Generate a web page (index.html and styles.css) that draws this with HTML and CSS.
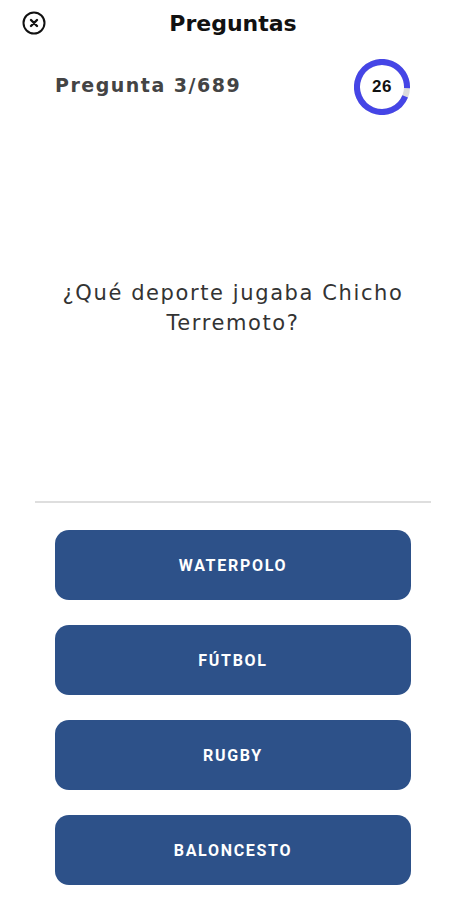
FILE: index.html
```html
<!DOCTYPE html>
<html lang="es">
<head>
  <meta charset="UTF-8">
  <title>Preguntas</title>
  <link rel="stylesheet" href="styles.css">
</head>
<body>

  <div class="topbar">
    <button class="close-btn" aria-label="Cerrar">
      <svg width="24" height="24" viewBox="0 0 24 24">
        <circle cx="12" cy="12" r="10.5" fill="none" stroke="#111" stroke-width="2"/>
        <path d="M9 9 L15 15 M15 9 L9 15" stroke="#111" stroke-width="2.4" stroke-linecap="round"/>
      </svg>
    </button>
    <h1 class="title">Preguntas</h1>
    <div></div>
  </div>

  <div class="status">
    <span class="counter">Pregunta 3/689</span>
    <div class="timer">
      <svg width="56" height="56" viewBox="0 0 56 56">
        <circle cx="28" cy="28" r="25" fill="none" stroke="#dcdcdc" stroke-width="6"/>
        <!-- 26 s restantes -->
        <circle cx="28" cy="28" r="25" fill="none" stroke="#4545e6" stroke-width="6"
                stroke-dasharray="147.5 157.1" transform="rotate(22 28 28)"/>
      </svg>
      <span class="timer-num">26</span>
    </div>
  </div>

  <div class="question-area">
    <p class="question">¿Qué deporte jugaba Chicho Terremoto?</p>
  </div>

  <div class="divider"></div>

  <div class="answers">
    <button class="answer-btn">WATERPOLO</button>
    <button class="answer-btn">FÚTBOL</button>
    <button class="answer-btn">RUGBY</button>
    <button class="answer-btn">BALONCESTO</button>
  </div>

</body>
</html>
```

FILE: styles.css
```css
body {
  margin: 0;
  background-color: white;
  font-family: "DejaVu Sans", sans-serif;
  color: #222;
}
.topbar {
  display: grid;
  grid-template-columns: 1fr auto 1fr;
  align-items: center;
  height: 46px;
}
.close-btn {
  justify-self: start;
  margin-left: 22px;
  padding: 0;
  border: none;
  background: none;
  display: flex;
  cursor: pointer;
}
.title {
  margin: 0;
  font-size: 22px;
  font-weight: bold;
  color: #111;
}
.status {
  display: flex;
  justify-content: space-between;
  align-items: center;
  padding: 0 56px 0 55px;
  margin-top: 13px;
}
.counter {
  font-size: 19px;
  font-weight: bold;
  color: #444;
  letter-spacing: 1.5px;
  margin-top: -4px;
}
.timer {
  position: relative;
  width: 56px;
  height: 56px;
}
.timer svg {
  display: block;
}
.timer-num {
  position: absolute;
  inset: 0;
  display: flex;
  align-items: center;
  justify-content: center;
  font-family: "Liberation Sans", sans-serif;
  font-size: 17px;
  font-weight: bold;
  color: #111;
  letter-spacing: 0.5px;
}
.question-area {
  height: 386px;
  display: flex;
  align-items: center;
  justify-content: center;
  padding: 0 40px;
}
.question {
  margin: 0;
  text-align: center;
  font-size: 21px;
  line-height: 30px;
  color: #333;
  letter-spacing: 1.6px;
}
.divider {
  height: 2px;
  background-color: #dedede;
  margin: 0 35px;
}
.answers {
  display: flex;
  flex-direction: column;
  gap: 25px;
  padding: 27px 55px 0;
}
.answer-btn {
  height: 70px;
  border: none;
  border-radius: 14px;
  background-color: #2d5189;
  color: white;
  font-family: Roboto, sans-serif;
  font-size: 16px;
  font-weight: bold;
  letter-spacing: 1.7px;
  cursor: pointer;
}
```
